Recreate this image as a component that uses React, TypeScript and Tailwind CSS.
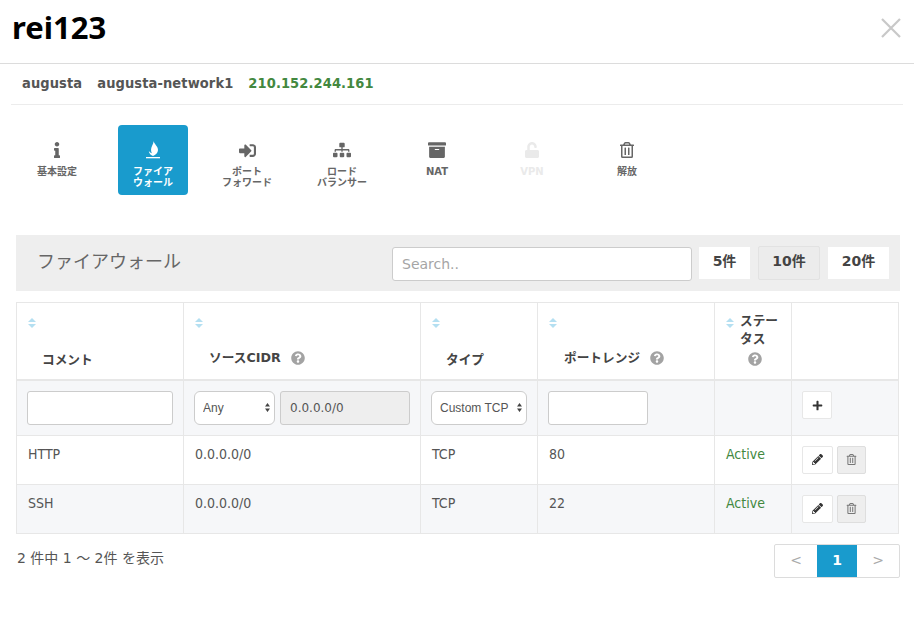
import type { ReactNode } from 'react';
import { FaArchive, FaInfo, FaPencilAlt, FaPlus, FaQuestionCircle, FaRegTrashAlt, FaSignInAlt, FaSitemap, FaUnlock } from 'react-icons/fa';

function FlameIcon() {
  return (
    <svg width="16" height="18" viewBox="0 0 16 18" fill="currentColor">
      <path d="M8.500 0C9 3 13 5 13 9c0 3-2.500 5-5 6-2-.5-4-2.500-4.200-5C5 11.500 6.500 12 7 12.500 5.500 10 6 7 7 5c.8-1.500 1.500-3 1.500-5z" />
      <rect x="1" y="16" width="14" height="1.300" />
    </svg>
  );
}

function SortIcon() {
  return (
    <svg width="8" height="10" viewBox="0 0 8 10" className="shrink-0 text-[#b4dff1]" fill="currentColor">
      <path d="M4 0l4 4H0zM0 6h8l-4 4z" />
    </svg>
  );
}

function SelectArrows() {
  return (
    <svg width="5" height="9" viewBox="0 0 5 9" className="pointer-events-none absolute right-[5px] top-[12px] text-[#444]" fill="currentColor">
      <path d="M2.500 0L5 3.500H0zM0 5.500h5L2.500 9z" />
    </svg>
  );
}

const tabs: { icon: ReactNode; label: string[]; active?: boolean; disabled?: boolean }[] = [
  { icon: <FaInfo size={16} />, label: ['基本設定'] },
  { icon: <FlameIcon />, label: ['ファイア', 'ウォール'], active: true },
  { icon: <FaSignInAlt size={17} />, label: ['ポート', 'フォワード'] },
  { icon: <FaSitemap size={18} />, label: ['ロード', 'バランサー'] },
  { icon: <FaArchive size={18} />, label: ['NAT'] },
  { icon: <FaUnlock size={16} />, label: ['VPN'], disabled: true },
  { icon: <FaRegTrashAlt size={16} />, label: ['解放'] },
];

const rows = [
  { comment: 'HTTP', cidr: '0.0.0.0/0', type: 'TCP', port: '80', striped: false },
  { comment: 'SSH', cidr: '0.0.0.0/0', type: 'TCP', port: '22', striped: true },
];

const cellClass = 'border border-[#e7e7e7] align-top';
const rowCellClass = "pl-[11px] pt-[9px] text-[14px] [font-family:'DejaVu_Sans_Condensed','DejaVu_Sans',sans-serif]";
const inputClass = 'h-[34px] rounded-[3px] border border-[#ccc] bg-white';
const selectClass = "appearance-none rounded-[6px] pl-[8px] text-[12px] text-[#555] [font-family:'Liberation_Sans',sans-serif]";

function Help() {
  return <FaQuestionCircle size={14} className="inline-block text-[#a3a3a3]" />;
}

export default function App() {
  return (
    <div className="h-[626px] w-[914px] overflow-hidden bg-white text-[#555] [font-family:'DejaVu_Sans','Noto_Sans_CJK_JP',sans-serif]">
      <div className="flex h-[64px] items-center justify-between border-b border-[#dcdcdc] pb-[8px] pl-[12px] pr-[13px]">
        <h1 className="text-[31px] font-bold leading-none text-black [font-family:'Noto_Sans',sans-serif]">rei123</h1>
        <svg width="20" height="20" viewBox="0 0 20 20" className="text-[#c8c8c8]" stroke="currentColor" strokeWidth="2.200">
          <path d="M1 1l18 18M19 1L1 19" />
        </svg>
      </div>

      <div className="mx-[11px] flex h-[41px] items-center gap-[15px] border-b border-[#ececec] pb-[2px] pl-[11px] text-[14.500px] font-bold leading-none tracking-[0.1px] [font-family:'DejaVu_Sans_Condensed','DejaVu_Sans',sans-serif]">
        <span>augusta</span>
        <span>augusta-network1</span>
        <span className="text-[#43883f]">210.152.244.161</span>
      </div>

      <div className="mt-[20px] flex gap-[25px] pl-[22px]">
        {tabs.map((tab) => (
          <div
            key={tab.label[0]}
            className={`flex h-[70px] w-[70px] flex-col items-center rounded-[4px] pt-[15px] text-[10px] font-bold leading-[11px] ${
              tab.active ? 'relative left-[1px] bg-[#199bcd] text-white' : tab.disabled ? 'text-[#eaeaea]' : 'text-[#666]'
            }`}
          >
            <div className="flex h-[20px] items-center justify-center">{tab.icon}</div>
            <div className="mt-[6px] text-center">
              {tab.label.map((line) => (
                <div key={line}>{line}</div>
              ))}
            </div>
          </div>
        ))}
      </div>

      <div className="ml-[16px] mr-[14px] mt-[40px] flex h-[56px] items-center bg-[#eeeeee] pl-[21px]">
        <div className="pb-[2px] text-[18px] leading-none text-[#666]">ファイアウォール</div>
        <input
          placeholder="Search.."
          className={`ml-auto mt-[2px] w-[300px] px-[9px] text-[14px] text-[#555] outline-none placeholder:text-[#a5a5a5] ${inputClass}`}
        />
        <div className="ml-[7px] flex items-center gap-[8px] pr-[11px] text-[14px] font-bold leading-none text-[#444]">
          <div className="flex h-[32px] w-[51px] items-center justify-center bg-white pb-[4px]">5件</div>
          <div className="flex h-[34px] w-[62px] items-center justify-center rounded-[2px] border border-[#e2e2e2] bg-[#ececec] pb-[4px]">10件</div>
          <div className="flex h-[32px] w-[61px] items-center justify-center bg-white pb-[4px]">20件</div>
        </div>
      </div>

      <table className="ml-[16px] mt-[11px] w-[882px] table-fixed border-collapse text-[13px] leading-[18px]">
        <colgroup>
          <col className="w-[167px]" />
          <col className="w-[237px]" />
          <col className="w-[117px]" />
          <col className="w-[177px]" />
          <col className="w-[77px]" />
          <col className="w-[107px]" />
        </colgroup>
        <thead>
          <tr className="h-[77px] text-[12.7px] font-bold text-[#444]">
            <th className={`${cellClass} border-b-2 pl-[11px] text-left`}>
              <div className="flex h-[76px] flex-col">
                <div className="mt-[15px]"><SortIcon /></div>
                <div className="mt-[23px] pl-[14px]">コメント</div>
              </div>
            </th>
            <th className={`${cellClass} border-b-2 pl-[11px] text-left`}>
              <div className="flex h-[76px] flex-col">
                <div className="mt-[15px]"><SortIcon /></div>
                <div className="mt-[21px] flex items-center gap-[10px] pl-[14px]">ソースCIDR <Help /></div>
              </div>
            </th>
            <th className={`${cellClass} border-b-2 pl-[11px] text-left`}>
              <div className="flex h-[76px] flex-col">
                <div className="mt-[15px]"><SortIcon /></div>
                <div className="mt-[23px] pl-[14px]">タイプ</div>
              </div>
            </th>
            <th className={`${cellClass} border-b-2 pl-[11px] text-left`}>
              <div className="flex h-[76px] flex-col">
                <div className="mt-[15px]"><SortIcon /></div>
                <div className="mt-[21px] flex items-center gap-[10px] pl-[15px]">ポートレンジ <Help /></div>
              </div>
            </th>
            <th className={`${cellClass} border-b-2 pl-[11px] text-left`}>
              <div className="flex h-[76px] items-start gap-[6px] pt-[9px]">
                <div className="mt-[6px]"><SortIcon /></div>
                <div className="leading-[18px]">
                  ステー<br />タス
                  <div className="mt-[1px] pl-[8px]"><Help /></div>
                </div>
              </div>
            </th>
            <th className={`${cellClass} border-b-2`} />
          </tr>
        </thead>
        <tbody>
          <tr className="h-[55px] bg-[#f6f7f9]">
            <td className={`${cellClass} pl-[10px] pt-[10px]`}>
              <input className={`w-[146px] ${inputClass}`} />
            </td>
            <td className={`${cellClass} pl-[10px] pt-[10px]`}>
              <div className="flex gap-[5px]">
                <div className="relative">
                  <select className={`w-[81px] ${inputClass} ${selectClass}`}>
                    <option>Any</option>
                  </select>
                  <SelectArrows />
                </div>
                <div className="flex h-[34px] w-[130px] items-center rounded-[3px] border border-[#ccc] bg-[#eeeeee] pl-[9px] text-[12px]">0.0.0.0/0</div>
              </div>
            </td>
            <td className={`${cellClass} pl-[10px] pt-[10px]`}>
              <div className="relative w-[96px]">
                <select className={`w-[96px] ${inputClass} ${selectClass}`}>
                  <option>Custom TCP</option>
                </select>
                <SelectArrows />
              </div>
            </td>
            <td className={`${cellClass} pl-[10px] pt-[10px]`}>
              <input className={`w-[100px] ${inputClass}`} />
            </td>
            <td className={cellClass} />
            <td className={`${cellClass} pl-[10px] pt-[10px]`}>
              <div className="flex h-[28px] w-[30px] items-center justify-center rounded-[2px] border border-[#e7e7e7] bg-white text-[#333]">
                <FaPlus size={11} />
              </div>
            </td>
          </tr>
          {rows.map((row) => (
            <tr key={row.comment} className={`h-[49px] ${row.striped ? 'bg-[#f6f7f9]' : 'bg-white'}`}>
              <td className={`${cellClass} ${rowCellClass}`}>{row.comment}</td>
              <td className={`${cellClass} ${rowCellClass}`}>{row.cidr}</td>
              <td className={`${cellClass} ${rowCellClass}`}>{row.type}</td>
              <td className={`${cellClass} ${rowCellClass}`}>{row.port}</td>
              <td className={`${cellClass} ${rowCellClass} text-[#43883f]`}>Active</td>
              <td className={`${cellClass} pl-[10px] pt-[10px]`}>
                <div className="flex gap-[4px]">
                  <div className="flex h-[28px] w-[31px] items-center justify-center rounded-[2px] border border-[#e7e7e7] bg-white text-[#333]">
                    <FaPencilAlt size={11} />
                  </div>
                  <div className="flex h-[28px] w-[29px] items-center justify-center rounded-[2px] border border-[#dedede] bg-[#eeeeee] text-[#777]">
                    <FaRegTrashAlt size={11} />
                  </div>
                </div>
              </td>
            </tr>
          ))}
        </tbody>
      </table>

      <div className="ml-[17px] mr-[14px] mt-[10px] flex items-start justify-between">
        <div className="mt-[5px] text-[14px] leading-[18px]">2 件中 1 〜 2件 を表示</div>
        <div className="flex h-[34px] overflow-hidden rounded-[2px] border border-[#dcdcdc] text-[14px]">
          <div className="flex w-[42px] items-center justify-center text-[#aaa]">&lt;</div>
          <div className="flex w-[40px] items-center justify-center bg-[#199bcd] font-bold text-white">1</div>
          <div className="flex w-[42px] items-center justify-center text-[#aaa]">&gt;</div>
        </div>
      </div>
    </div>
  );
}
